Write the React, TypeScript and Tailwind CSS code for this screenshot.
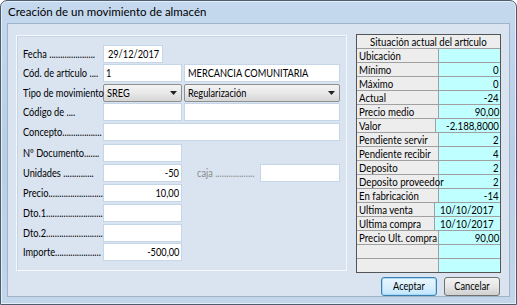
import React from "react";

const ui = { fontFamily: "Lato, 'Liberation Sans', Arial, sans-serif" };

type Align = "l" | "r" | "c";

// narrow text, like the old MS Sans Serif look
function T({ children, al = "l", className = "" }: { children: React.ReactNode; al?: Align; className?: string }) {
  const o = al === "r" ? "origin-right" : al === "c" ? "origin-center" : "origin-left";
  return <span className={`inline-block whitespace-nowrap scale-x-[0.84] ${o} ${className}`}>{children}</span>;
}

type Row = { label: string; top: string; kind: string; a?: string; b?: string };

const rows: Row[] = [
  { label: "Fecha .....................", top: "mt-0", kind: "date", a: "29/12/2017" },
  { label: "Cód. de artículo ....", top: "mt-[1px]", kind: "pair", a: "1", b: "MERCANCIA COMUNITARIA" },
  { label: "Tipo de movimiento", top: "mt-[2px]", kind: "select", a: "SREG", b: "Regularización" },
  { label: "Código de ....", top: "mt-[1px]", kind: "pair", a: "", b: "" },
  { label: "Concepto..................", top: "mt-[2px]", kind: "wide" },
  { label: "Nº Documento.......", top: "mt-[3px]", kind: "single" },
  { label: "Unidades ..............", top: "mt-[2px]", kind: "units", a: "-50" },
  { label: "Precio.........................", top: "mt-[2px]", kind: "num", a: "10,00" },
  { label: "Dto.1..........................", top: "mt-[2px]", kind: "num", a: "" },
  { label: "Dto.2..........................", top: "mt-[2px]", kind: "num", a: "" },
  { label: "Importe.....................", top: "mt-[1px]", kind: "num", a: "-500,00" },
];

const box = "h-[18px] bg-white border border-[#c6d6e9] flex items-center px-[2px] text-[11px] text-black overflow-hidden";

function Select({ value, w }: { value: string; w: string }) {
  return (
    <div className={`${w} h-[18px] rounded-[2px] border border-[#8e8f8f] bg-gradient-to-b from-[#f4f4f4] via-[#e8e8e8] to-[#d6d6d6] flex items-center pl-[3px] pr-[4px] text-[11px]`}>
      <span className="flex-1"><T>{value}</T></span>
      <svg width="7" height="4" viewBox="0 0 7 4"><path d="M0 0h7L3.5 4z" fill="#222" /></svg>
    </div>
  );
}

function FormRow({ r }: { r: Row }) {
  let right: React.ReactNode = null;
  if (r.kind === "date") right = <div className={`${box} w-[60px] justify-center`}><T al="c">{r.a}</T></div>;
  if (r.kind === "pair")
    right = (
      <div className="flex gap-[2px]">
        <div className={`${box} w-[79px]`}><T>{r.a}</T></div>
        <div className={`${box} w-[156px] pl-[3px]`}><T>{r.b}</T></div>
      </div>
    );
  if (r.kind === "select")
    right = (
      <div className="flex gap-[2px]">
        <Select value={r.a || ""} w="w-[79px]" />
        <Select value={r.b || ""} w="w-[156px]" />
      </div>
    );
  if (r.kind === "wide") right = <div className={`${box} w-[237px]`} />;
  if (r.kind === "single") right = <div className={`${box} w-[79px]`} />;
  if (r.kind === "num") right = <div className={`${box} w-[79px] justify-end`}><T al="r">{r.a}</T></div>;
  if (r.kind === "units")
    right = (
      <div className="flex items-center">
        <div className={`${box} w-[79px] justify-end`}><T al="r">{r.a}</T></div>
        <span className="ml-[15px] w-[63px] text-[11px] text-[#8a8a8a]"><T>caja ..................</T></span>
        <div className={`${box} w-[80px]`} />
      </div>
    );
  return (
    <div className={`flex items-center h-[18px] ${r.top}`}>
      <span className="w-[80px] text-[11px] text-black"><T>{r.label}</T></span>
      {right}
    </div>
  );
}

const stock: [string, string, Align][] = [
  ["Ubicación", "", "r"],
  ["Mínimo", "0", "r"],
  ["Máximo", "0", "r"],
  ["Actual", "-24", "r"],
  ["Precio medio", "90,00", "r"],
  ["Valor", "-2.188,8000", "r"],
  ["Pendiente servir", "2", "r"],
  ["Pendiente recibir", "4", "r"],
  ["Deposito", "2", "r"],
  ["Deposito proveedor", "2", "r"],
  ["En fabricación", "-14", "r"],
  ["Ultima venta", "10/10/2017", "c"],
  ["Ultima compra", "10/10/2017", "c"],
  ["Precio Ult. compra", "90,00", "r"],
  ["", "", "r"],
  ["", "", "r"],
];

function StockTable() {
  return (
    <div className="w-[145px] border border-[#555] bg-[#a0a0a0] flex flex-col gap-px text-[11.5px] leading-none text-black">
      <div className="h-[13px] bg-[#ededed] flex items-center justify-center"><T al="c">Situación actual del artículo</T></div>
      {stock.map(([k, v, al], i) => (
        <div key={i} className="h-[13px] flex gap-px">
          <div className="w-[81px] bg-[#ededed] flex items-center pl-[2px]"><T>{k}</T></div>
          <div className={`flex-1 bg-[#c0ffff] flex items-center pr-[1px] ${al === "c" ? "justify-center" : "justify-end"}`}>
            <T al={al}>{v}</T>
          </div>
        </div>
      ))}
    </div>
  );
}

export default function App() {
  return (
    <div className="w-[517px] h-[305px] overflow-hidden bg-white" style={ui}>
      <div className="w-[517px] h-[305px] flex flex-col rounded-t-[7px] border border-[#4d5d6e] bg-gradient-to-b from-[#c4d8ee] via-[#b9cfe6] to-[#c3d6ea] px-[6px] pb-[7px] shadow-[inset_0_0_0_1px_#e4eef8]">
        <div className="h-[23px] flex items-center pl-[1px] text-[11.5px] text-black">
          Creación de un movimiento de almacén
        </div>
        <div className="flex-1 flex flex-col border border-[#9fb4cb] bg-[#dae4f0]">
          <div className="flex pt-[10px] pl-[8px]">
            <div className="w-[331px] h-[236px] mt-[1px] border border-[#f4f8fc] shadow-[inset_1px_1px_0_#c6d4e4] pt-[9px] pl-[6px]">
              {rows.map((r, i) => (
                <FormRow key={i} r={r} />
              ))}
            </div>
            <div className="ml-[9px]">
              <StockTable />
            </div>
          </div>
          <div className="flex justify-end gap-[7px] pr-[9px] mt-[4px]">
            <button className="w-[56px] h-[19px] rounded-[3px] border border-[#3c7fb1] bg-gradient-to-b from-[#eaf6fd] via-[#d9f0fc] to-[#bee6fd] text-[11px] text-black shadow-[inset_0_0_0_1px_#a8d8f5]">
              <T al="c">Aceptar</T>
            </button>
            <button className="w-[56px] h-[19px] rounded-[3px] border border-[#707070] bg-gradient-to-b from-[#f2f2f2] via-[#e6e6e6] to-[#d0d0d0] text-[11px] text-black">
              <T al="c">Cancelar</T>
            </button>
          </div>
        </div>
      </div>
    </div>
  );
}
